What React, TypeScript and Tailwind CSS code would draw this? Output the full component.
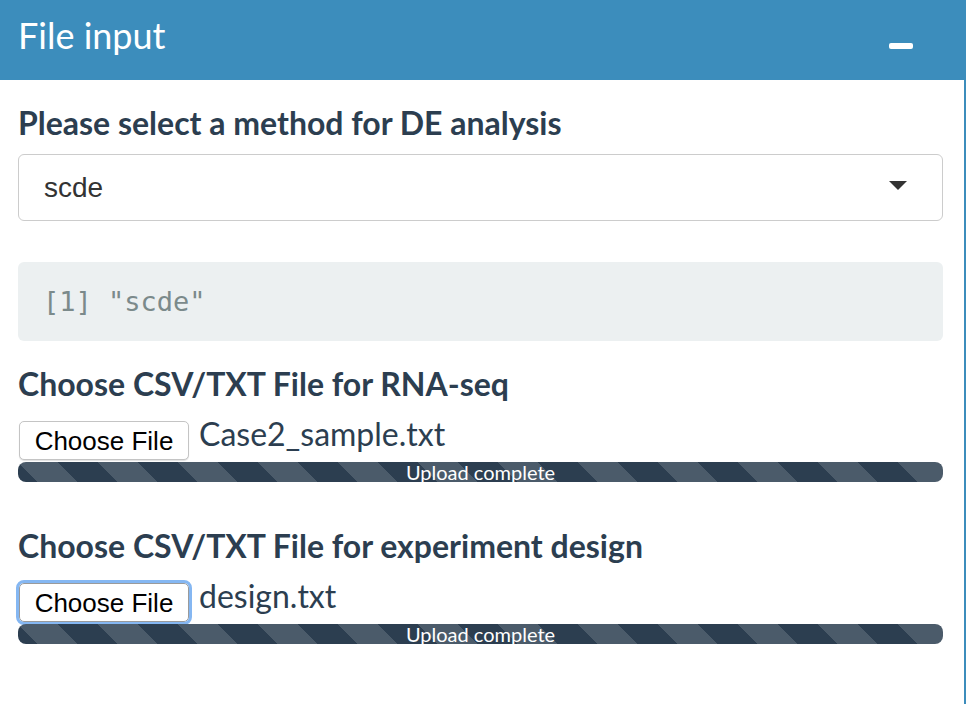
export default function App() {
  return (
    <div className="min-h-screen w-full bg-white">
      <div className="flex min-h-screen w-[966px] flex-col border-r-2 border-[#3c8dbc] font-['Lato',sans-serif]">
        {/* Box header */}
        <div className="flex h-[80px] items-start justify-between bg-[#3c8dbc] pl-[18px] pr-[51px]">
          <h3 className="pt-[14px] text-[36px] font-normal leading-[43px] text-white">File input</h3>
          <div className="mt-[43px] h-[6px] w-[24px] rounded-[2px] bg-white" />
        </div>

        {/* Box body */}
        <div className="flex flex-col pl-[18px] pr-[21px] pt-[25px] text-[#2c3e50]">
          <label className="text-[32px] font-bold leading-[35px]">Please select a method for DE analysis</label>

          <div className="mt-[14px] flex h-[67px] items-center justify-between rounded-[6px] border border-[#cccccc] bg-white pl-[25px] pr-[35px]">
            <span className="font-['Liberation_Sans',Arial,sans-serif] text-[28px] leading-none text-[#333333]">scde</span>
            <svg width="18" height="9" viewBox="0 0 18 9" className="-mt-[4px]">
              <polygon points="0,0 18,0 9,9" fill="#333333" />
            </svg>
          </div>

          <pre className="mt-[41px] flex h-[79px] items-center rounded-[6px] bg-[#ecf0f1] pl-[25px] font-['DejaVu_Sans_Mono',monospace] text-[27px] leading-none text-[#7b8a8b]">
            [1] "scde"
          </pre>

          <FileInput label="Choose CSV/TXT File for RNA-seq" fileName="Case2_sample.txt" className="mt-[25px]" />
          <FileInput
            label="Choose CSV/TXT File for experiment design"
            fileName="design.txt"
            focused
            className="mt-[46px]"
          />
        </div>
      </div>
    </div>
  );
}

function FileInput({
  label,
  fileName,
  focused = false,
  className = '',
}: {
  label: string;
  fileName: string;
  focused?: boolean;
  className?: string;
}) {
  return (
    <div className={`flex flex-col ${className}`}>
      <label className="text-[32px] font-bold leading-[35px]">{label}</label>

      <div className="mt-[20px] flex items-start">
        <button
          className={
            focused
              ? 'ml-[1px] h-[39px] w-[170px] rounded-[5px] border border-[#9a9a9a] bg-white font-["Liberation_Sans",Arial,sans-serif] text-[26px] leading-none text-black outline-[3px] outline-[#85b7f2] outline-solid'
              : 'ml-[1px] h-[39px] w-[170px] rounded-[5px] border border-[#c4c4c4] bg-white font-["Liberation_Sans",Arial,sans-serif] text-[26px] leading-none text-black shadow-[0_1px_1px_rgba(0,0,0,0.12)]'
          }
        >
          Choose File
        </button>
        <span className="-mt-[5px] ml-[10px] text-[32px] leading-[35px]">{fileName}</span>
      </div>

      <div className="mt-[2px] flex h-[20px] items-center justify-center rounded-[8px] bg-[#2c3e50] bg-[linear-gradient(45deg,rgba(255,255,255,.15)_25%,transparent_25%,transparent_50%,rgba(255,255,255,.15)_50%,rgba(255,255,255,.15)_75%,transparent_75%,transparent)] bg-[length:80px_80px]">
        <span className="text-[20px] leading-[20px] text-white">Upload complete</span>
      </div>
    </div>
  );
}
